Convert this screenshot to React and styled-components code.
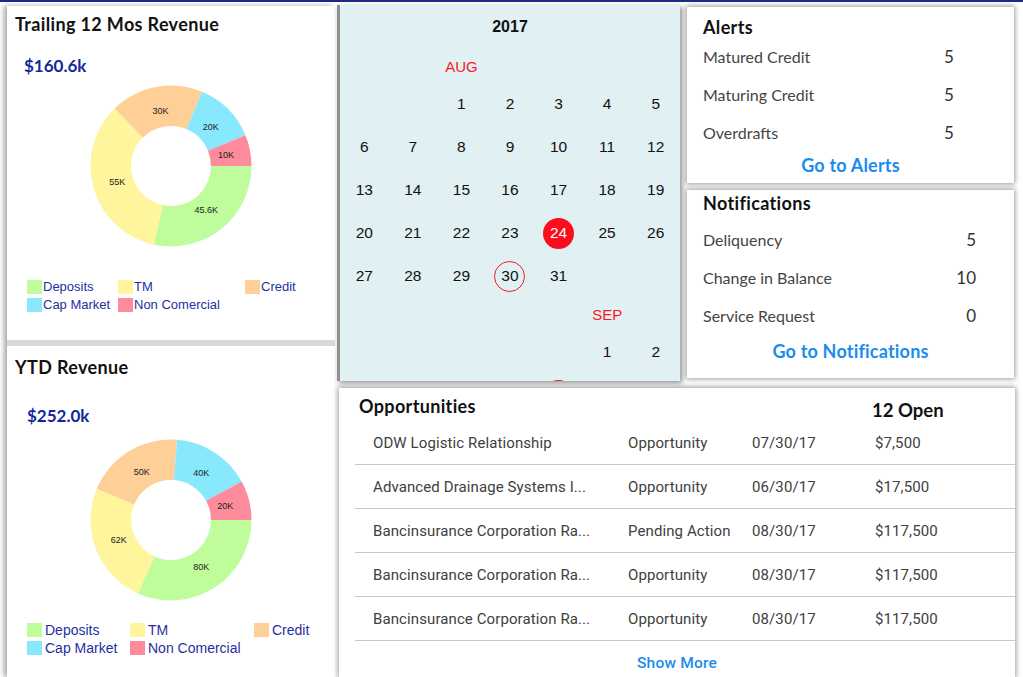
import React from 'react'
import styled, { createGlobalStyle } from 'styled-components'

const GlobalStyle = createGlobalStyle`
  html, body {
    margin: 0;
    padding: 0;
    background: #ffffff;
  }
  body {
    font-family: 'Lato', 'Liberation Sans', sans-serif;
    overflow: hidden;
  }
`

const COLORS = {
  deposits: '#bffc9b',
  tm: '#fef59c',
  credit: '#fecf96',
  cap: '#88e9fc',
  nonCom: '#fe8b9c',
}

const Page = styled.div`
  width: 1023px;
  height: 677px;
  box-sizing: border-box;
  border-top: 2px solid #1b2a84;
  padding: 3px 0 0 7px;
  display: flex;
  overflow: hidden;
  background: #ffffff;
`

const LeftCol = styled.div`
  width: 328px;
  margin-top: 1px;
  display: flex;
  flex-direction: column;
  gap: 6px;
  background: #d8d8d8;
  box-shadow: -3px 0 5px rgba(0, 0, 0, 0.35);
`

const Card = styled.div`
  background: #ffffff;
  box-sizing: border-box;
  box-shadow: 0 0 5px 1px rgba(0, 0, 0, 0.4);
`

const RevenueBox = styled(Card)`
  height: ${(p) => (p.$large ? '340px' : '334px')};
  padding: ${(p) => (p.$large ? '11px' : '8px')} 8px 0 8px;
  box-shadow: none;
  flex-shrink: 0;
`

const CardTitle = styled.div`
  font-family: 'Lato', sans-serif;
  font-weight: 700;
  font-size: 18px;
  letter-spacing: 0.35px;
  line-height: 20px;
  color: #111;
`

const BigValue = styled.div`
  font-family: 'Lato', sans-serif;
  font-weight: 700;
  font-size: 17px;
  line-height: 20px;
  color: #10289c;
  margin: ${(p) => (p.$large ? '29px 0 0 12px' : '22px 0 0 9px')};
`

const ChartWrap = styled.div`
  display: flex;
  justify-content: center;
  margin-top: ${(p) => (p.$large ? '9px' : '5px')};
`

const Legend = styled.div`
  display: grid;
  grid-template-columns: ${(p) => (p.$large ? '103px 124px auto' : '91px 127px auto')};
  row-gap: 4px;
  padding-left: 12px;
  margin-top: ${(p) => (p.$large ? '18px' : '29px')};
`

const LegendItem = styled.div`
  display: flex;
  align-items: center;
  gap: ${(p) => (p.$large ? '3px' : '1px')};
  font-family: 'Liberation Sans', sans-serif;
  font-size: ${(p) => (p.$large ? '14px' : '13px')};
  line-height: 14px;
  color: #1f2f9f;
`

const Swatch = styled.span`
  display: inline-block;
  width: 15px;
  height: 14px;
  background: ${(p) => p.$color};
`

const SliceLabel = styled.text`
  font-family: 'Liberation Sans', sans-serif;
  font-size: 9px;
  fill: #222;
`

function arcPath(cx, cy, r, ir, a0, a1) {
  const rad = (a) => (a * Math.PI) / 180
  const p = (rr, a) => [cx + rr * Math.cos(rad(a)), cy + rr * Math.sin(rad(a))]
  const large = a1 - a0 > 180 ? 1 : 0
  const [x0, y0] = p(r, a0)
  const [x1, y1] = p(r, a1)
  const [x2, y2] = p(ir, a1)
  const [x3, y3] = p(ir, a0)
  return `M${x0} ${y0} A${r} ${r} 0 ${large} 1 ${x1} ${y1} L${x2} ${y2} A${ir} ${ir} 0 ${large} 0 ${x3} ${y3} Z`
}

function Donut({ data }) {
  const total = data.reduce((s, d) => s + d.value, 0)
  const cx = 85
  const cy = 85
  let angle = 0
  return (
    <svg width="170" height="170" viewBox="0 0 170 170">
      {data.map((d) => {
        const a0 = angle
        const a1 = angle + (d.value / total) * 360
        angle = a1
        const mid = ((a0 + a1) / 2) * (Math.PI / 180)
        return (
          <g key={d.key}>
            <path d={arcPath(cx, cy, 80.5, 40, a0, a1)} fill={d.color} />
            <SliceLabel
              x={cx + 56 * Math.cos(mid)}
              y={cy + 56 * Math.sin(mid) + 3}
              textAnchor="middle"
            >
              {d.label}
            </SliceLabel>
          </g>
        )
      })}
    </svg>
  )
}

function RevenueCard({ title, value, data, large }) {
  return (
    <RevenueBox $large={large}>
      <CardTitle>{title}</CardTitle>
      <BigValue $large={large}>{value}</BigValue>
      <ChartWrap $large={large}>
        <Donut data={data} />
      </ChartWrap>
      <Legend $large={large}>
        <LegendItem $large={large}><Swatch $color={COLORS.deposits} />Deposits</LegendItem>
        <LegendItem $large={large}><Swatch $color={COLORS.tm} />TM</LegendItem>
        <LegendItem $large={large}><Swatch $color={COLORS.credit} />Credit</LegendItem>
        <LegendItem $large={large}><Swatch $color={COLORS.cap} />Cap Market</LegendItem>
        <LegendItem $large={large}><Swatch $color={COLORS.nonCom} />Non Comercial</LegendItem>
      </Legend>
    </RevenueBox>
  )
}

const RightArea = styled.div`
  width: 678px;
  margin-left: 2px;
  display: flex;
  flex-direction: column;
`

const TopRow = styled.div`
  display: flex;
  align-items: flex-start;
`

const Calendar = styled.div`
  width: 343px;
  height: 376px;
  box-sizing: border-box;
  border-left: 3px solid #909090;
  background: #e0f0f3;
  overflow: hidden;
  box-shadow: 2px 2px 5px rgba(0, 0, 0, 0.45);
  font-family: 'Liberation Sans', sans-serif;
`

const YearLabel = styled.div`
  height: 44.5px;
  line-height: 44.5px;
  text-align: center;
  font-weight: 700;
  font-size: 16px;
  color: #111;
`

const CalGrid = styled.div`
  display: grid;
  grid-template-columns: repeat(7, 1fr);
`

const MonthLabel = styled.div`
  grid-column: ${(p) => p.$col} / span 1;
  height: 33px;
  line-height: 33px;
  text-align: center;
  color: #fb1a26;
  font-size: 15px;
`

const MonthRowFill = styled.div`
  grid-column: 1 / span 7;
  display: grid;
  grid-template-columns: repeat(7, 1fr);
`

const DayCell = styled.div`
  grid-column: ${(p) => p.$col || 'auto'};
  height: 43px;
  display: flex;
  align-items: center;
  justify-content: center;
`

const DayNum = styled.span`
  width: 31px;
  height: 31px;
  border-radius: 50%;
  box-sizing: border-box;
  display: flex;
  align-items: center;
  justify-content: center;
  font-size: 15.5px;
  color: ${(p) => (p.$today ? '#fff' : '#111')};
  background: ${(p) => (p.$today ? '#fb0d1b' : 'transparent')};
  border: ${(p) => (p.$ring ? '1px solid #fb1a26' : 'none')};
`

function MonthBlock({ label, startCol, days, today, ring, extra }) {
  const cells = []
  for (let d = 1; d <= days; d++) {
    cells.push(
      <DayCell key={d} $col={d === 1 ? startCol : undefined}>
        <DayNum $today={d === today} $ring={d === ring}>{d}</DayNum>
      </DayCell>
    )
  }
  return (
    <>
      <MonthRowFill>
        <MonthLabel $col={startCol}>{label}</MonthLabel>
      </MonthRowFill>
      {cells}
      {extra}
    </>
  )
}

const RightCol = styled.div`
  width: 327px;
  margin-left: 7px;
  margin-top: 2px;
  display: flex;
  flex-direction: column;
  gap: 7px;
`

const InfoCard = styled(Card)`
  height: ${(p) => p.$h}px;
  padding: ${(p) => p.$pt}px 16px 0 16px;
`

const InfoRows = styled.div`
  margin-top: ${(p) => p.$mt}px;
`

const InfoRow = styled.div`
  display: flex;
  align-items: center;
  height: 38px;
  font-family: 'Lato', sans-serif;
  font-size: 16px;
  color: #444;
`

const InfoLabel = styled.span`
  flex: 1;
`

const InfoValue = styled.span`
  width: ${(p) => p.$w}px;
  margin-right: ${(p) => p.$mr || 0}px;
  text-align: ${(p) => p.$align};
  font-size: 17px;
  color: #333;
`

const LinkText = styled.div`
  text-align: center;
  font-family: 'Lato', sans-serif;
  font-weight: 700;
  font-size: 18px;
  letter-spacing: 0.2px;
  line-height: 20px;
  color: #1a8cf0;
  margin-top: ${(p) => p.$mt}px;
`

function InfoPanel({ title, rows, link, h, pt, mt, linkMt, valueW, valueMr, align }) {
  return (
    <InfoCard $h={h} $pt={pt}>
      <CardTitle>{title}</CardTitle>
      <InfoRows $mt={mt}>
        {rows.map(([label, val]) => (
          <InfoRow key={label}>
            <InfoLabel>{label}</InfoLabel>
            <InfoValue $w={valueW} $mr={valueMr} $align={align}>{val}</InfoValue>
          </InfoRow>
        ))}
      </InfoRows>
      <LinkText $mt={linkMt}>{link}</LinkText>
    </InfoCard>
  )
}

const OppCard = styled(Card)`
  width: 676px;
  height: 300px;
  margin: 7px 0 0 2px;
  padding: 0 0 0 16px;
`

const OppHeader = styled.div`
  height: 33px;
  display: flex;
  align-items: flex-start;
  padding-left: 4px;
`

const OppTitle = styled(CardTitle)`
  width: 513px;
  padding-top: 8px;
`

const OpenCount = styled.div`
  font-family: 'Lato', sans-serif;
  font-weight: 700;
  font-size: 18.5px;
  line-height: 20px;
  padding-top: 12px;
  color: #111;
`

const OppRow = styled.div`
  display: grid;
  grid-template-columns: 255px 124px 123px auto;
  align-items: center;
  height: 43px;
  padding-left: 18px;
  border-bottom: 1px solid #c9c9c9;
  font-family: 'Roboto', sans-serif;
  font-size: 15px;
  letter-spacing: 0.1px;
  color: #404040;
`

const OppName = styled.span`
  white-space: nowrap;
`

const ShowMore = styled(LinkText)`
  font-family: 'Roboto', sans-serif;
  font-weight: 500;
  font-size: 15.5px;
  margin-left: -16px;
`

const opps = [
  ['ODW Logistic Relationship', 'Opportunity', '07/30/17', '$7,500'],
  ['Advanced Drainage Systems I...', 'Opportunity', '06/30/17', '$17,500'],
  ['Bancinsurance Corporation Ra...', 'Pending Action', '08/30/17', '$117,500'],
  ['Bancinsurance Corporation Ra...', 'Opportunity', '08/30/17', '$117,500'],
  ['Bancinsurance Corporation Ra...', 'Opportunity', '08/30/17', '$117,500'],
]

const trailing = [
  { key: 'd', value: 45.6, label: '45.6K', color: COLORS.deposits },
  { key: 't', value: 55, label: '55K', color: COLORS.tm },
  { key: 'c', value: 30, label: '30K', color: COLORS.credit },
  { key: 'm', value: 20, label: '20K', color: COLORS.cap },
  { key: 'n', value: 10, label: '10K', color: COLORS.nonCom },
]

const ytd = [
  { key: 'd', value: 80, label: '80K', color: COLORS.deposits },
  { key: 't', value: 62, label: '62K', color: COLORS.tm },
  { key: 'c', value: 50, label: '50K', color: COLORS.credit },
  { key: 'm', value: 40, label: '40K', color: COLORS.cap },
  { key: 'n', value: 20, label: '20K', color: COLORS.nonCom },
]

export default function App() {
  return (
    <>
      <GlobalStyle />
      <Page>
        <LeftCol>
          <RevenueCard title="Trailing 12 Mos Revenue" value="$160.6k" data={trailing} />
          <RevenueCard title="YTD Revenue" value="$252.0k" data={ytd} large />
        </LeftCol>
        <RightArea>
          <TopRow>
            <Calendar>
              <YearLabel>2017</YearLabel>
              <CalGrid>
                <MonthBlock label="AUG" startCol={3} days={31} today={24} ring={30} />
                <MonthBlock
                  label="SEP"
                  startCol={6}
                  days={2}
                  extra={
                    <DayCell $col={5}>
                      <DayNum $today />
                    </DayCell>
                  }
                />
              </CalGrid>
            </Calendar>
            <RightCol>
              <InfoPanel
                title="Alerts"
                rows={[['Matured Credit', '5'], ['Maturing Credit', '5'], ['Overdrafts', '5']]}
                link="Go to Alerts"
                h={176}
                pt={10}
                mt={0}
                linkMt={4}
                valueW={54}
                align="left"
              />
              <InfoPanel
                title="Notifications"
                rows={[['Deliquency', '5'], ['Change in Balance', '10'], ['Service Request', '0']]}
                link="Go to Notifications"
                h={188}
                pt={3}
                mt={7}
                linkMt={7}
                valueW={40}
                valueMr={22}
                align="right"
              />
            </RightCol>
          </TopRow>
          <OppCard>
            <OppHeader>
              <OppTitle>Opportunities</OppTitle>
              <OpenCount>12 Open</OpenCount>
            </OppHeader>
            {opps.map((o, i) => (
              <OppRow key={i}>
                <OppName>{o[0]}</OppName>
                <span>{o[1]}</span>
                <span>{o[2]}</span>
                <span>{o[3]}</span>
              </OppRow>
            ))}
            <ShowMore $mt={12}>Show More</ShowMore>
          </OppCard>
        </RightArea>
      </Page>
    </>
  )
}
